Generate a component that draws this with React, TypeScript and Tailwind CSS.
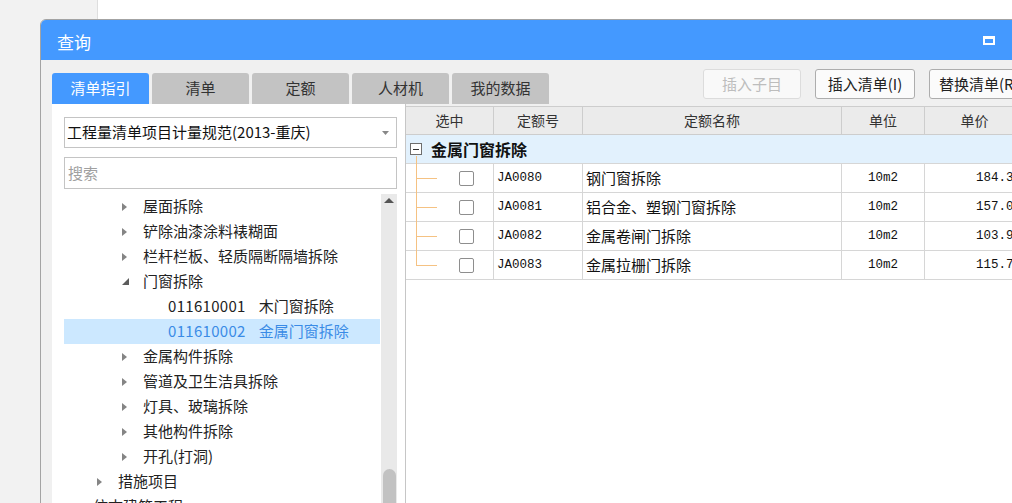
import React from "react";

type TreeItem = {
  level: 1 | 2 | 3 | 4;
  label: string;
  code?: string;
  arrow?: "right" | "down";
  selected?: boolean;
};

const treeItems: TreeItem[] = [
  { level: 3, label: "屋面拆除", arrow: "right" },
  { level: 3, label: "铲除油漆涂料裱糊面", arrow: "right" },
  { level: 3, label: "栏杆栏板、轻质隔断隔墙拆除", arrow: "right" },
  { level: 3, label: "门窗拆除", arrow: "down" },
  { level: 4, code: "011610001", label: "木门窗拆除" },
  { level: 4, code: "011610002", label: "金属门窗拆除", selected: true },
  { level: 3, label: "金属构件拆除", arrow: "right" },
  { level: 3, label: "管道及卫生洁具拆除", arrow: "right" },
  { level: 3, label: "灯具、玻璃拆除", arrow: "right" },
  { level: 3, label: "其他构件拆除", arrow: "right" },
  { level: 3, label: "开孔(打洞)", arrow: "right" },
  { level: 2, label: "措施项目", arrow: "right" },
  { level: 1, label: "仿古建筑工程", arrow: "right" },
];

const indent: Record<number, string> = {
  1: "pl-[8px]",
  2: "pl-[33px]",
  3: "pl-[58px]",
  4: "pl-[83px]",
};

const quotaRows = [
  { code: "JA0080", name: "钢门窗拆除", unit: "10m2", price: "184.35" },
  { code: "JA0081", name: "铝合金、塑钢门窗拆除", unit: "10m2", price: "157.05" },
  { code: "JA0082", name: "金属卷闸门拆除", unit: "10m2", price: "103.92" },
  { code: "JA0083", name: "金属拉栅门拆除", unit: "10m2", price: "115.71" },
];

const tabs = ["清单指引", "清单", "定额", "人材机", "我的数据"];

const cols = "grid grid-cols-[88px_89px_259px_83px_100px]";

const Arrow = ({ dir }: { dir?: "right" | "down" }) => {
  if (dir === "right")
    return (
      <svg width="5" height="8" viewBox="0 0 5 8">
        <polygon points="0,0 5,4 0,8" fill="#858585" />
      </svg>
    );
  if (dir === "down")
    return (
      <svg width="7" height="7" viewBox="0 0 7 7">
        <polygon points="7,0 7,7 0,7" fill="#5c5c5c" />
      </svg>
    );
  return null;
};

const TreeRow = ({ item }: { item: TreeItem }) => (
  <div
    className={`h-[25px] flex items-center ${indent[item.level]} ${
      item.selected ? "bg-[#cce8ff] text-[#3a8be6]" : "text-[#222]"
    }`}
  >
    <div className="w-[21px] shrink-0 flex items-center">
      <Arrow dir={item.arrow} />
    </div>
    {item.code && <span className="tracking-[0.3px]">{item.code}</span>}
    <span className={item.code ? "ml-[13px]" : ""}>{item.label}</span>
  </div>
);

export default function App() {
  return (
    <div className="relative w-[1012px] h-[503px] overflow-hidden flex bg-white font-['Noto_Sans_CJK_SC',sans-serif]">
      <div className="w-[98px] h-full bg-[#f2f2f2] border-r border-[#dedede]" />
      <div className="flex-1 bg-white" />

      {/* dialog window */}
      <div className="absolute left-[40px] top-[19px] w-[1000px] h-[500px] flex flex-col rounded-t-[6px] border border-[#a3a3a3] bg-[#f0f0f0] overflow-hidden">
        <div className="h-[40px] shrink-0 bg-[#4499ff] flex items-center justify-between pl-[16px] pr-[44px]">
          <span className="text-white text-[17px] pt-[3px]">查询</span>
          <div className="w-[12px] h-[9px] border-2 border-t-[3px] border-white" />
        </div>

        <div className="flex-1 flex flex-col px-[11px]">
          <div className="h-[44px] shrink-0 flex">
            <div className="flex gap-[3px] mt-[13px]">
              {tabs.map((t, i) => (
                <div
                  key={t}
                  className={`w-[97px] h-[31px] rounded-t-[3px] flex items-center justify-center text-[15px] ${
                    i === 0 ? "bg-[#4499ff] text-white" : "bg-[#c3c3c3] text-[#333]"
                  }`}
                >
                  {t}
                </div>
              ))}
            </div>
            <div className="flex gap-[14px] mt-[9px] ml-[154px]">
              <div className="w-[98px] h-[30px] rounded-[3px] border border-[#dcdcdc] bg-[#f9f9f9] text-[#bdbdbd] text-[15px] flex items-center justify-center">
                插入子目
              </div>
              <div className="w-[100px] h-[30px] rounded-[3px] border border-[#adadad] bg-[#fbfbfb] text-[#222] text-[15px] flex items-center justify-center">
                插入清单(I)
              </div>
              <div className="w-[110px] h-[30px] rounded-[3px] border border-[#adadad] bg-[#fbfbfb] text-[#222] text-[15px] flex items-center pl-[9px]">
                替换清单(R)
              </div>
            </div>
          </div>

          <div className="flex-1 flex">
            {/* left guide panel */}
            <div className="w-[353px] bg-white pl-[12px] pr-[8px] pt-[13px] flex flex-col text-[15px]">
              <div className="h-[31px] border border-[#c4c4c4] flex items-center justify-between pl-[2px] pr-[7px] text-[#111]">
                <span>工程量清单项目计量规范(2013-重庆)</span>
                <svg width="7" height="4" viewBox="0 0 7 4">
                  <polygon points="0,0 7,0 3.5,4" fill="#888" />
                </svg>
              </div>
              <div className="h-[32px] mt-[9px] border border-[#c4c4c4] flex items-center pl-[3px] text-[#a0a0a0]">
                搜索
              </div>
              <div className="flex-1 flex mt-[5px] gap-[1px]">
                <div className="w-[316px]">
                  {treeItems.map((item) => (
                    <TreeRow key={item.label} item={item} />
                  ))}
                </div>
                <div className="w-[16px] bg-[#e9e9e9] flex flex-col items-center">
                  <svg className="mt-[4px]" width="10" height="5" viewBox="0 0 10 5">
                    <polygon points="0,5 5,0 10,5" fill="#555" />
                  </svg>
                  <div className="mt-[266px] w-[13px] h-[60px] rounded-t-full bg-[#c2c2c2]" />
                </div>
              </div>
            </div>

            {/* right quota table */}
            <div className="flex-1 flex flex-col border-l border-[#c6c6c6]">
              <div className="h-[2px] bg-[#f0f0f0]" />
              <div className="flex-1 bg-white">
                <div className={`${cols} h-[29px] bg-[#ebebeb] border-y border-[#cdcdcd] text-[14px] text-[#333]`}>
                  {["选中", "定额号", "定额名称", "单位", "单价"].map((h) => (
                    <div key={h} className="flex items-center justify-center border-r border-[#cdcdcd]">
                      {h}
                    </div>
                  ))}
                </div>

                <div className="relative h-[29px] bg-[#e2f1fd] border-b border-[#d6d6d6] flex items-center pl-[4px]">
                  <div className="w-[12px] h-[12px] border border-[#6e6e6e] bg-white flex items-center justify-center">
                    <div className="w-[6px] h-[1px] bg-[#333]" />
                  </div>
                  <span className="ml-[9px] text-[16px] font-bold text-[#111]">金属门窗拆除</span>
                  <div className="absolute left-[10px] top-[21px] bottom-[-1px] w-[1px] bg-[#f5c283]" />
                </div>

                {quotaRows.map((r, i) => (
                  <div key={r.code} className={`${cols} h-[29px] border-b border-[#d6d6d6] text-[#111]`}>
                    <div className="relative border-r border-[#d6d6d6] flex items-center pl-[53px]">
                      <div
                        className={`absolute left-[10px] top-0 w-[1px] bg-[#f5c283] ${
                          i === quotaRows.length - 1 ? "h-1/2" : "bottom-[-1px]"
                        }`}
                      />
                      <div className="absolute left-[10px] top-1/2 w-[21px] h-[1px] bg-[#f5c283]" />
                      <div className="w-[15px] h-[15px] rounded-[2px] border border-[#8e8e8e] bg-white" />
                    </div>
                    <div className="border-r border-[#d6d6d6] flex items-center pl-[3px] font-['Liberation_Mono',monospace] text-[12.5px]">
                      {r.code}
                    </div>
                    <div className="border-r border-[#d6d6d6] flex items-center pl-[3px] text-[15px]">
                      {r.name}
                    </div>
                    <div className="border-r border-[#d6d6d6] flex items-center justify-center font-['Liberation_Mono',monospace] text-[12.5px]">
                      {r.unit}
                    </div>
                    <div className="border-r border-[#d6d6d6] flex items-center justify-end pr-[3px] font-['Liberation_Mono',monospace] text-[12.5px]">
                      {r.price}
                    </div>
                  </div>
                ))}
              </div>
            </div>
          </div>
        </div>
      </div>
    </div>
  );
}
